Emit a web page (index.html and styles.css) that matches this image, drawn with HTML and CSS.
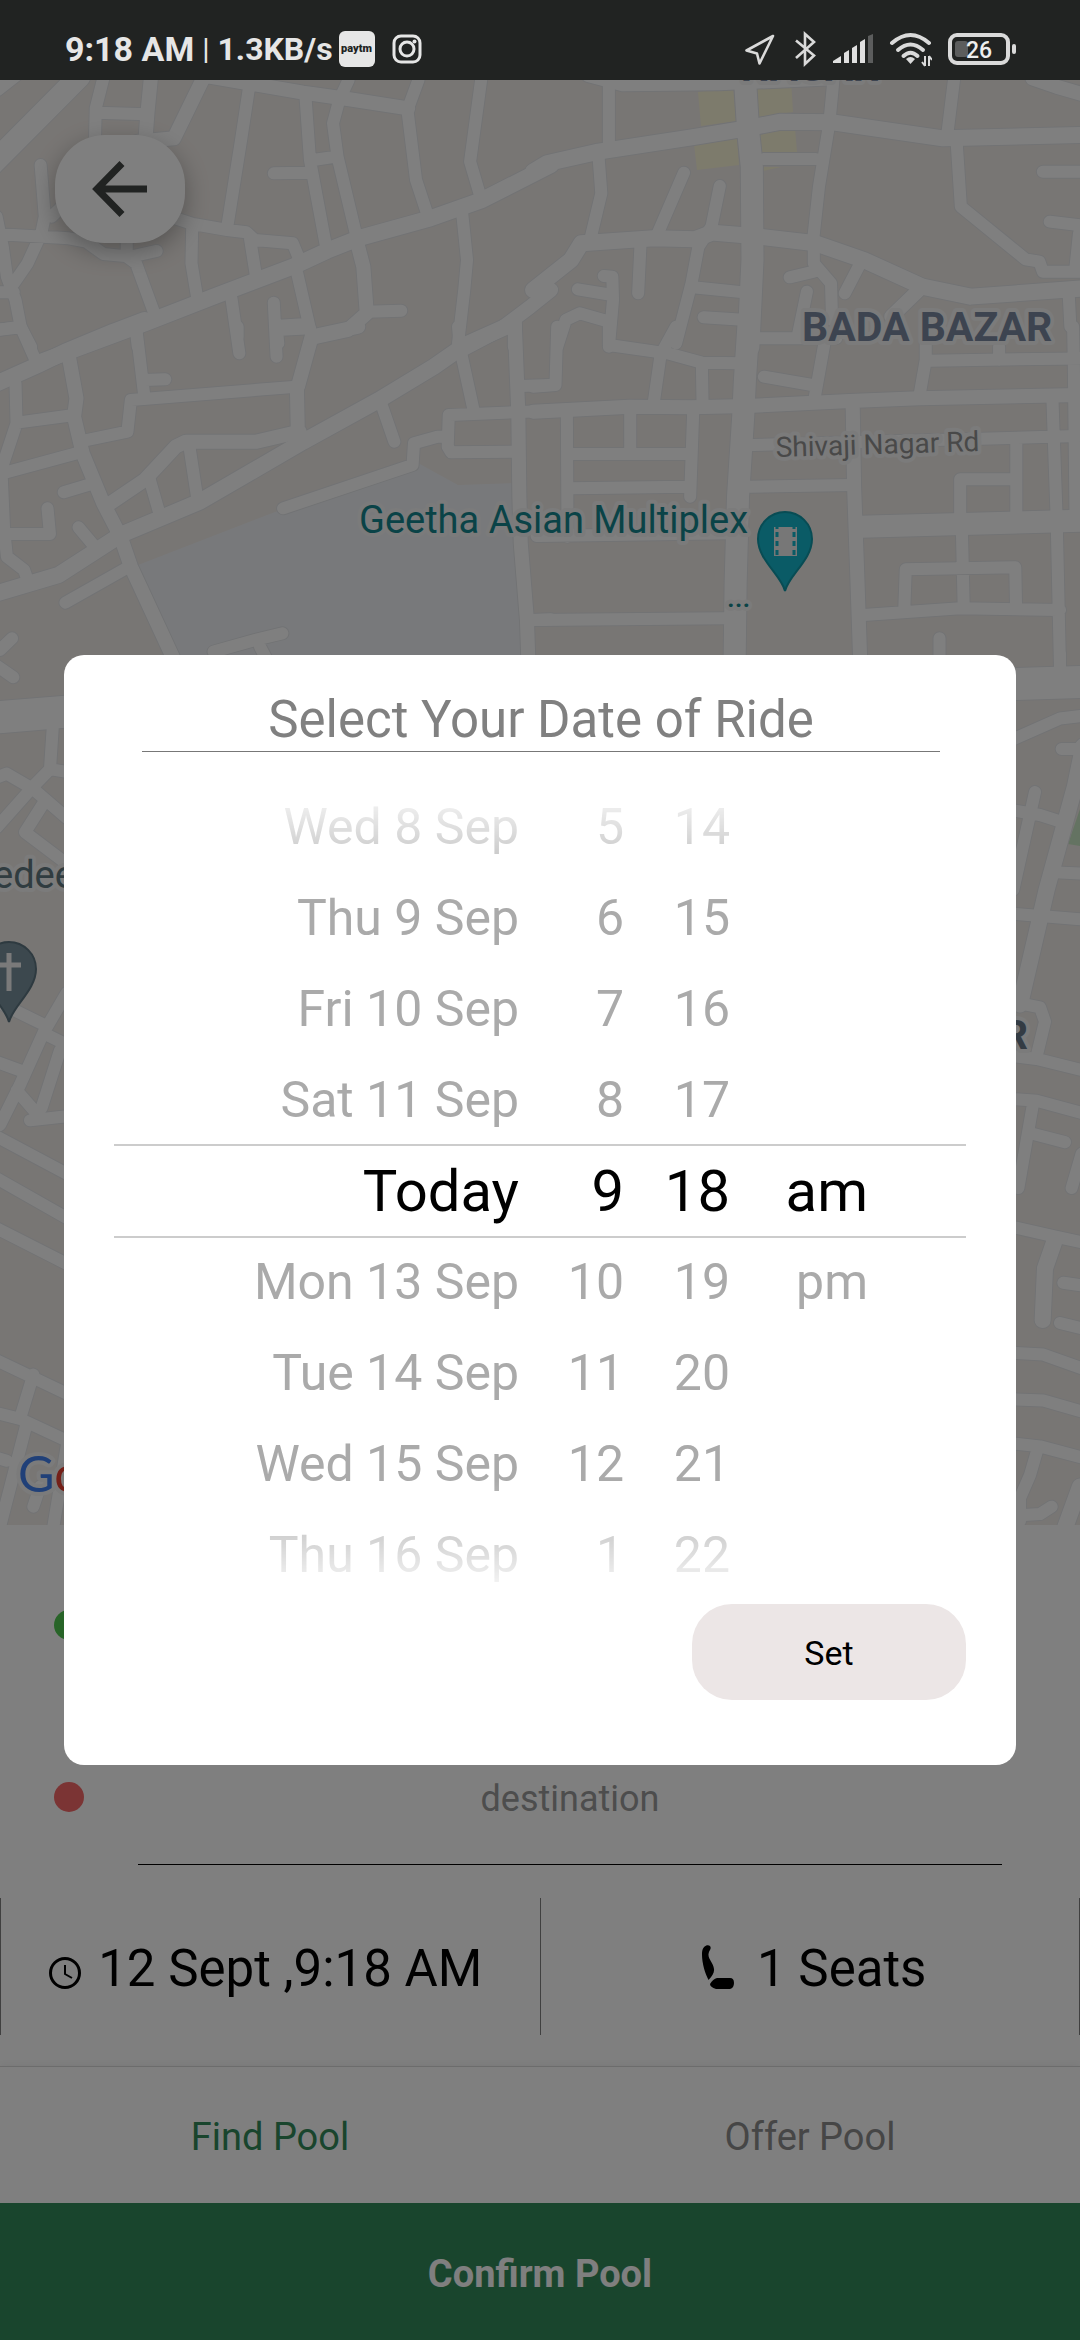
FILE: index.html
```html
<!DOCTYPE html>
<html lang="en">
<head>
<meta charset="utf-8">
<meta name="viewport" content="width=device-width, initial-scale=1">
<title>Select Your Date of Ride</title>
<link rel="stylesheet" href="styles.css">
</head>
<body>
<header class="status">
  <span class="status-time">9:18 AM</span>
  <span class="status-sep">|</span>
  <span class="status-rate">1.3KB/s</span>
  <span class="status-paytm">paytm</span>
  <svg class="status-insta" width="30" height="30" viewBox="0 0 30 30" fill="none" stroke="#e6e6e6" stroke-width="3">
    <rect x="2" y="2" width="26" height="26" rx="7"/><circle cx="15" cy="15" r="7"/><circle cx="22.500" cy="7.500" r="2" fill="#e6e6e6" stroke="none"/>
  </svg>
  <div class="status-icons">
    <svg width="32" height="32" viewBox="0 0 32 32" fill="none" stroke="#dadada" stroke-width="2.600" stroke-linejoin="round"><path d="M28 3 1.500 17.500 12 20.500 14.500 30.500Z"/></svg>
    <svg width="24" height="36" viewBox="0 0 24 36" fill="none" stroke="#dadada" stroke-width="2.600"><path d="M3 9.500 21 24.500 12 33V3L21 11 3 27"/></svg>
    <svg width="40" height="32" viewBox="0 0 40 32" fill="#e0e0e0"><path d="M0 30V28L8 23V30Z"/><path d="M11 30V20L16 17V30Z"/><path d="M19 30V15L24 12V30Z"/><path d="M27 30V9L32 6V30Z"/><path d="M35 30V3L40 1V30Z" fill="#5c5d5d"/></svg>
    <svg width="43" height="36" viewBox="0 0 43 36"><g fill="none" stroke="#dadada" stroke-width="4" stroke-linecap="round"><path d="M3 12Q21.500-4 40 12"/><path d="M9 19Q21.500 8 34 19"/><path d="M14.500 25Q21.500 18.500 28.500 25"/></g><path d="M17 28Q21.500 24 26 28L21.500 33Z" fill="#dadada"/><path d="M36 25V35M33 31l3 4M40 35V25M40 25l3 4" fill="none" stroke="#dadada" stroke-width="2"/></svg>
    <svg class="battery" width="68" height="32" viewBox="0 0 68 32"><rect x="2" y="2" width="58" height="28" rx="7" fill="none" stroke="#dadada" stroke-width="4"/><rect x="64" y="11" width="4" height="10" rx="2" fill="#dadada"/><rect x="7" y="8" width="13" height="16" rx="3" fill="#5c5d5d"/><text x="31" y="25" text-anchor="middle">26</text></svg>
  </div>
</header>

<main class="screen">
  <section class="map" aria-label="Map">
    <svg class="map-canvas" viewBox="0 80 1080 1445" preserveAspectRatio="xMidYMid slice">
      <defs>
        <g id="roads">
          <g transform="scale(.3444 .3333)">
            <path class="r22" d="M-20 490 230 230"/>
            <path class="r16" d="M-10 265 40 225M120 1085 425 968 620 890 850 800 950 752 1040 715 1250 655 1400 600 1600 495"/>
            <path class="r14" d="M600 228 880 278 1010 297 1185 325M590 235 505 415 400 425M438 235 428 340 423 410M1600 870 1540 920 1450 990 1340 1050M1495 960V1040M1040 740 1055 800 1065 940 1010 990 920 1010"/>
            <path class="r12" d="M300 235 278 325 276 410M280 338 425 343M722 270 700 420 660 680M887 290 900 480 945 730M1012 240 985 300 967 370 980 470 1033 700M1215 240 1183 330 1208 540 1240 640M1397 240 1365 485 1395 590M910 480 975 470M795 520 900 518M500 652 560 672 660 690 715 697 740 720 850 730 870 780M558 680 556 790 572 890M725 710 742 820M118 495 130 650 120 700 80 790 40 850M150 650 190 610M-10 702 200 715 250 725 300 762 380 770 455 753M-10 650 8 740 20 830 45 900 60 980 90 1040M-10 877 40 877M-10 990 60 980M368 700V770L395 790 448 940M672 895 695 1060M863 820 903 1000M795 908 803 1070M800 978 890 972M1065 935 1165 932M1342 640 1356 780 1348 870 1330 1030M395 995 400 1040"/>
          </g>
          <g transform="translate(540 0) scale(.3444 .3333)">
            <path class="r22" d="M595 235 605 400 615 500 617 780 605 1040"/>
            <path class="r16" d="M-20 515 20 490 170 455 440 412 600 385 700 365 850 367 1170 415 1580 405M-20 870 90 780 120 730 330 715 450 718 500 698 620 708 800 730 940 780 1110 860 1250 890 1580 865"/>
            <path class="r14" d="M140 225 240 253 520 250 850 235M1430 235 1500 260 1600 290M1100 870 1020 950"/>
            <path class="r12" d="M200 240V440M852 240 840 370 810 560 793 720M1202 240 1183 400 1210 430 1222 620 1410 778 1450 785 1460 815 1600 815M650 477 800 477M170 470 178 580 148 710M418 518 342 700M522 558 498 680 460 740 440 850 395 1030M292 730 285 880M185 828 210 830 212 900 200 1040M110 868 210 885M50 1040 75 960 115 940 200 965M445 862 600 878M475 952 600 960M795 740 795 790 845 850 848 960M725 832 795 815M775 875 750 1000M925 800 885 880M1460 515 1600 515M1480 665 1600 680M1565 700 1555 800M1535 880 1540 980"/>
          </g>
          <g transform="translate(0 330) scale(.3444 .3333)">
            <path class="r16" d="M-20 165 110 105 190 65 330 5 420-30M-10 790 170 735 350 615 580 515 880 335 1100 210 1260 110 1350 45 1480-15"/>
            <path class="r14" d="M200 80 222 205 215 260 240 370 300 520 350 620 380 710 510 1000M862 170 865 320M865 170 905 20 1040-10M1495-10 1505 250 1508 500 1512 640 1530 870 1535 1020M320 520 420 450 510 350 540 335 745 335 870 305"/>
            <path class="r12" d="M60-10 105 95M-10 0 60-8M45 160 48 280 0 430M50 278 215 255M240 333 370 305 380 210 860 170M395-10 418 190M418 150 480 148M-10 435 240 365M185 487 265 462M435 450 460 540M550 350 572 500M690-10V20M803-10 808 40M803 0 900-5M1110 230 1145 335M5 440 12 600 20 680 70 720 80 750M20 612 145 612 138 535M228 592 275 650M190 818 375 710M822 535 1198 405 1202 340 1270 320 1300 320M1303 255 1300 350 1310 367 1500 365M1303 255 1580 243M1330-10 1335 50 1375 240M1510 168 1600 165M0 960 35 925M620 965 740 930 820 910M755 950 780 1000M1540 870 1600 868"/>
          </g>
          <g transform="translate(540 330) scale(.3444 .3333)">
            <path class="r22" d="M605-10 595 150 590 260 575 500 568 760 565 1000M930 590 1580 572"/>
            <path class="r14" d="M-20 245 260 230 440 232 600 228 900 213 1100 205 1580 195M908 230 912 470 920 700 930 1000"/>
            <path class="r12" d="M50-10 45 165-20 170M200-10 200 45 370 70 470 98 580 100M395-10 350 75 330 220M470 100 472 220M620 25 860 25M825 45 798 200M650 140 790 165M1120 30 1120 90 1103 190M1130 92 1580 85M1333 50V90M1548-10 1550 100 1555 560M78 250 80 620M262 240V360M445 240 436 500M95 372 430 372M95 475 430 470M-10 618 550 610M-20 870 540 865M615 345 1560 318M610 470 910 465M1488 210 1492 330 1500 560 1510 1020M1383 330V550M1220 560V448H1383M1225 600 1230 820M1058 830 1062 718 1380 712 1382 820M940 855 1220 835 1510 840M1160 925V1000"/>
          </g>
          <g transform="translate(0 660) scale(.3333 .574)">
            <path class="r32" d="M-10 100 200 90"/>
            <path class="r12" d="M-10 10 40 30M158 120 150 190 200 195M-10 292 100 220 150 190M-10 205 20 198 100 225 200 275M130 250 75 300 200 355M-10 595 130 635M200 580 130 650 60 740 0 810M-10 700 60 715M130 650 200 670M180 680 125 780M90 802 200 795M50 750 110 790M-10 830 200 895M-10 903 200 972M-10 990 200 1052M-10 1220 200 1278M-10 1312 60 1322 100 1245M60 1322 200 1360M80 1330 0 1510M-10 1390 20 1395M200 1370 160 1510M120 1440 100 1475"/>
          </g>
          <g transform="translate(960 660) scale(.3333 .574)">
            <path class="r32" d="M160 42 370 38"/>
            <path class="r16" d="M370 150 345 220 260 400 180 600M285 1010 255 1060 248 1150M360 1440 310 1520"/>
            <path class="r12" d="M300-10V20M160 138 300 102 370 97M305 155 370 155M160 262 240 270 310 283M290 370 370 372M225 230 160 400M160 442 370 452M195 600 240 605 255 630 230 690M160 690 230 695 370 715M160 765 230 768 370 790M220 770 175 920M215 825 315 840M365 860 335 920M160 988 290 1005 370 1015M310 1085 370 1090M300 1155 370 1165M160 1207 250 1210 370 1235M160 1288 250 1290 370 1310M160 1365 240 1370 370 1390M230 1380 210 1420 180 1460 180 1500M180 1490 240 1488 275 1475"/>
          </g>
        </g>
      </defs>
      <rect class="land" x="0" y="80" width="1080" height="1445"/>
      <path class="campus" d="M138 565 275 512 418 463 458 485 517 483 522 600V670H175Z"/>
      <path class="plaza" d="M698 92 733 87 736 121 701 126ZM756 80H791L793 112 759 117ZM760 133 795 128 797 152 761 152ZM694 144 737 137 739 165 697 170ZM763 167H781L763 171Z"/>
      <path class="park" d="M1080 809 1068 844 1080 846Z"/>
      <use href="#roads" class="casing"/>
      <use href="#roads" class="surface"/>
      <g class="labels">
        <text class="area" x="879" y="81" text-anchor="end">NAGAR</text>
        <text class="area" x="802" y="341">BADA BAZAR</text>
        <text class="street" x="776" y="457" transform="rotate(-1.700 776 457)">Shivaji Nagar Rd</text>
        <text class="poi" x="359" y="533">Geetha Asian Multiplex</text>
        <text class="poi small" x="727" y="607">...</text>
        <text class="church" x="-7" y="888">edee</text>
        <text class="area dark" x="1028" y="1049" text-anchor="end">R</text>
        <text class="google" x="18" y="1492"><tspan fill="#4080f0">G</tspan><tspan fill="#e84030">o</tspan></text>
      </g>
      <g>
        <path d="M785 591C781 575 758 560 758 539A27 27 0 0 1 812 539C812 560 789 575 785 591Z" fill="#14b6cc" stroke="#1098a8" stroke-width="2"/>
        <rect x="774" y="527" width="23" height="29" fill="#eee"/>
        <path d="M777 526V557M794 526V557" stroke="#14b6cc" stroke-width="3" stroke-dasharray="3 3 5 4 5 4 5 3"/>
      </g>
      <g>
        <path d="M9 1022C5 1006-18 990-18 969A27 27 0 0 1 36 969C36 990 13 1006 9 1022Z" fill="#78909c" stroke="#5c7480" stroke-width="2"/>
        <path d="M9 953V991M-4 965H21" stroke="#f4f4f4" stroke-width="5"/>
      </g>
    </svg>
    <button class="back" type="button" aria-label="Back">
      <svg width="56" height="56" viewBox="0 0 56 56" fill="none" stroke="#424644" stroke-width="7"><path d="M55 28H6M30 2.500 5 28 30 53.500"/></svg>
    </button>
  </section>

  <form class="stops">
    <div class="stop"><span class="dot pickup"></span><input type="text" aria-label="Pickup"></div>
    <div class="stop"><span class="dot drop"></span><input type="text" aria-label="Destination" placeholder="destination"></div>
  </form>

  <div class="details">
    <button class="detail" type="button">
      <svg class="clock" width="34" height="34" viewBox="0 0 34 34" fill="none" stroke="#000" stroke-width="3"><circle cx="17" cy="17" r="14.500"/><path d="M17 9V18L24 22" stroke-width="2"/></svg>
      <span>12 Sept ,9:18 AM</span>
    </button>
    <button class="detail seats" type="button">
      <svg width="34" height="44" viewBox="0 0 34 44"><path d="M9 1C7-.500 1.500 0 1 8 .700 18 4 28 7.500 35 11 31 13.500 28 13 24 12.500 18 7 14 7.500 9 8 5 11 4 9 1Z"/><path d="M16 33H29Q33 33 33 38T29 44H15Q9 42 9 39 12 34 16 33Z"/></svg>
      <span>1 Seats</span>
    </button>
  </div>

  <nav class="tabs">
    <button class="tab active" type="button">Find Pool</button>
    <button class="tab" type="button">Offer Pool</button>
  </nav>
  <button class="confirm" type="button">Confirm Pool</button>
</main>

<div class="backdrop">
  <section class="dialog" role="dialog" aria-labelledby="dialog-title">
    <h2 class="dialog-title" id="dialog-title">Select Your Date of Ride</h2>
    <div class="picker">
      <ul class="wheel" role="listbox" aria-label="Date">
        <li role="option">Wed 8 Sep</li><li role="option">Thu 9 Sep</li><li role="option">Fri 10 Sep</li><li role="option">Sat 11 Sep</li>
        <li role="option" aria-selected="true">Today</li>
        <li role="option">Mon 13 Sep</li><li role="option">Tue 14 Sep</li><li role="option">Wed 15 Sep</li><li role="option">Thu 16 Sep</li>
      </ul>
      <ul class="wheel" role="listbox" aria-label="Hour">
        <li role="option">5</li><li role="option">6</li><li role="option">7</li><li role="option">8</li>
        <li role="option" aria-selected="true">9</li>
        <li role="option">10</li><li role="option">11</li><li role="option">12</li><li role="option">1</li>
      </ul>
      <ul class="wheel" role="listbox" aria-label="Minute">
        <li role="option">14</li><li role="option">15</li><li role="option">16</li><li role="option">17</li>
        <li role="option" aria-selected="true">18</li>
        <li role="option">19</li><li role="option">20</li><li role="option">21</li><li role="option">22</li>
      </ul>
      <ul class="wheel period" role="listbox" aria-label="AM or PM">
        <li role="option" aria-selected="true">am</li>
        <li role="option">pm</li>
      </ul>
    </div>
    <div class="dialog-actions"><button class="set" type="button">Set</button></div>
  </section>
</div>
</body>
</html>
```

FILE: styles.css
```css
*, *::before, *::after { box-sizing: border-box; }

body {
  margin: 0;
  min-height: 100vh;
  display: flex;
  flex-direction: column;
  background: #fff;
  font-family: Roboto, "Liberation Sans", sans-serif;
}

button, input { font: inherit; border: 0; background: none; padding: 0; margin: 0; }
svg { display: block; flex: none; }

/* Status bar */
.status {
  position: relative;
  z-index: 3;
  height: 80px;
  display: flex;
  align-items: center;
  padding: 18px 64px 0 65px;
  background: #212322;
  color: #e6e6e6;
  line-height: 40px;
  white-space: nowrap;
}
.status-time { font-size: 34px; font-weight: 700; }
.status-sep { font-size: 30px; margin: 0 8px; }
.status-rate { font-size: 32px; font-weight: 700; }
.status-paytm {
  width: 36px;
  height: 36px;
  margin: 0 17px 0 6px;
  border-radius: 6px;
  background: #e6e6e6;
  color: #212322;
  font-size: 11px;
  font-weight: 900;
  line-height: 36px;
  text-align: center;
}
.status-icons { display: flex; align-items: center; gap: 16px; margin-left: auto; }
.battery text { font-size: 23px; font-weight: 500; fill: #eee; }

/* Map */
.screen { flex: 1; display: flex; flex-direction: column; }
.map { position: relative; flex: 1; min-height: 600px; overflow: hidden; }
.map-canvas { position: absolute; inset: 0; width: 100%; height: 100%; }
.land { fill: #f1ece8; }
.campus { fill: #f0f3f7; }
.plaza { fill: #fbf6d8; }
.park { fill: #c8e6c4; }
.casing { --edge: 2px; stroke: #e4e6e9; }
.surface { --edge: 0px; stroke: #fff; }
#roads path {
  fill: none;
  stroke-linecap: round;
  stroke-linejoin: round;
  vector-effect: non-scaling-stroke;
}
.r12 { stroke-width: calc(12px + var(--edge)); }
.r14 { stroke-width: calc(14px + var(--edge)); }
.r16 { stroke-width: calc(16px + var(--edge)); }
.r22 { stroke-width: calc(22px + var(--edge)); }
.r32 { stroke-width: calc(32px + var(--edge)); }
.labels text { font-size: 38px; paint-order: stroke; stroke: #f6f6f6; stroke-width: 8px; stroke-linejoin: round; }
.labels .area { font-size: 41px; font-weight: 700; fill: #7a88a0; }
.labels .dark { fill: #687888; }
.labels .street { font-size: 28px; fill: #929292; }
.labels .poi { fill: #14868e; }
.labels .small { font-size: 28px; font-weight: 500; }
.labels .church { fill: #607880; }
.labels .google { font-family: Lato, sans-serif; font-size: 50px; }
.back {
  position: relative;
  display: grid;
  place-items: center;
  width: 130px;
  height: 108px;
  margin: 55px 0 0 55px;
  border-radius: 50px;
  background: #fff;
  box-shadow: 0 8px 24px rgba(0, 0, 0, .3);
}

/* Pickup and destination */
.stops { display: flex; flex-direction: column; gap: 36px; padding: 32px 78px 33px 54px; }
.stop { display: flex; align-items: center; gap: 54px; }
.dot { width: 30px; height: 30px; border-radius: 50%; }
.pickup { background: #50c850; }
.drop { background: #f66868; }
.stop input {
  flex: 1;
  min-width: 0;
  height: 136px;
  padding-top: 4px;
  border-bottom: 1px solid #000;
  font-size: 36px;
  text-align: center;
}
.stop input::placeholder { color: #9a9a9a; opacity: 1; }

/* Time and seats */
.details { display: flex; margin-bottom: 31px; border-left: 1px solid #808080; }
.detail {
  width: 50%;
  display: flex;
  align-items: center;
  justify-content: center;
  gap: 16px;
  height: 137px;
  padding: 4px 10px 0 0;
  border-right: 1px solid #808080;
  color: #000;
  font-size: 51px;
  white-space: nowrap;
}
.clock { margin-top: 8px; }
.seats { gap: 22px; padding: 4px 0 0 8px; }
.seats svg { margin-bottom: 4px; }

/* Tabs and confirm */
.tabs { display: flex; border-top: 1px solid #d8d8d8; box-shadow: 0 -2px 8px rgba(0, 0, 0, .05); }
.tab { flex: 1; height: 136px; padding-top: 4px; color: #8c8c8c; font-size: 38px; }
.tab.active { color: #328a5a; }
.confirm { height: 137px; padding-top: 4px; background: #328a5a; color: #fff; font-size: 38px; font-weight: 700; }

/* Date dialog */
.backdrop {
  position: fixed;
  inset: 0;
  z-index: 2;
  display: grid;
  align-items: center;
  padding: 80px 64px 0;
  background: rgba(0, 0, 0, .5);
}
.dialog { padding: 35px 50px 65px; border-radius: 20px; background: #fff; }
.dialog-title {
  margin: 0 26px 30px 28px;
  padding-bottom: 1px;
  border-bottom: 1px solid #777;
  color: #808080;
  font-size: 51px;
  font-weight: 400;
  line-height: 60px;
  text-align: center;
}
.picker {
  position: relative;
  display: grid;
  grid-template-columns: 405fr 105fr 106fr 138fr 98fr;
  -webkit-mask-image: linear-gradient(transparent, #000 120px, #000 calc(100% - 120px), transparent);
  mask-image: linear-gradient(transparent, #000 120px, #000 calc(100% - 120px), transparent);
}
.picker::before {
  content: "";
  position: absolute;
  left: 0;
  right: 0;
  top: 362px;
  height: 94px;
  border: solid #ccc;
  border-width: 2px 0;
}
.wheel { margin: 0; padding: 0; list-style: none; color: #aaa; font-size: 50px; line-height: 91px; text-align: right; white-space: nowrap; }
.wheel [aria-selected="true"] { height: 91px; color: #000; font-size: 58px; }
.period { padding-top: 364px; }
.dialog-actions { display: flex; justify-content: flex-end; margin-top: 3px; }
.set { width: 274px; height: 96px; padding-top: 2px; border-radius: 40px; background: #ece6e6; color: #000; font-size: 34px; }
```
